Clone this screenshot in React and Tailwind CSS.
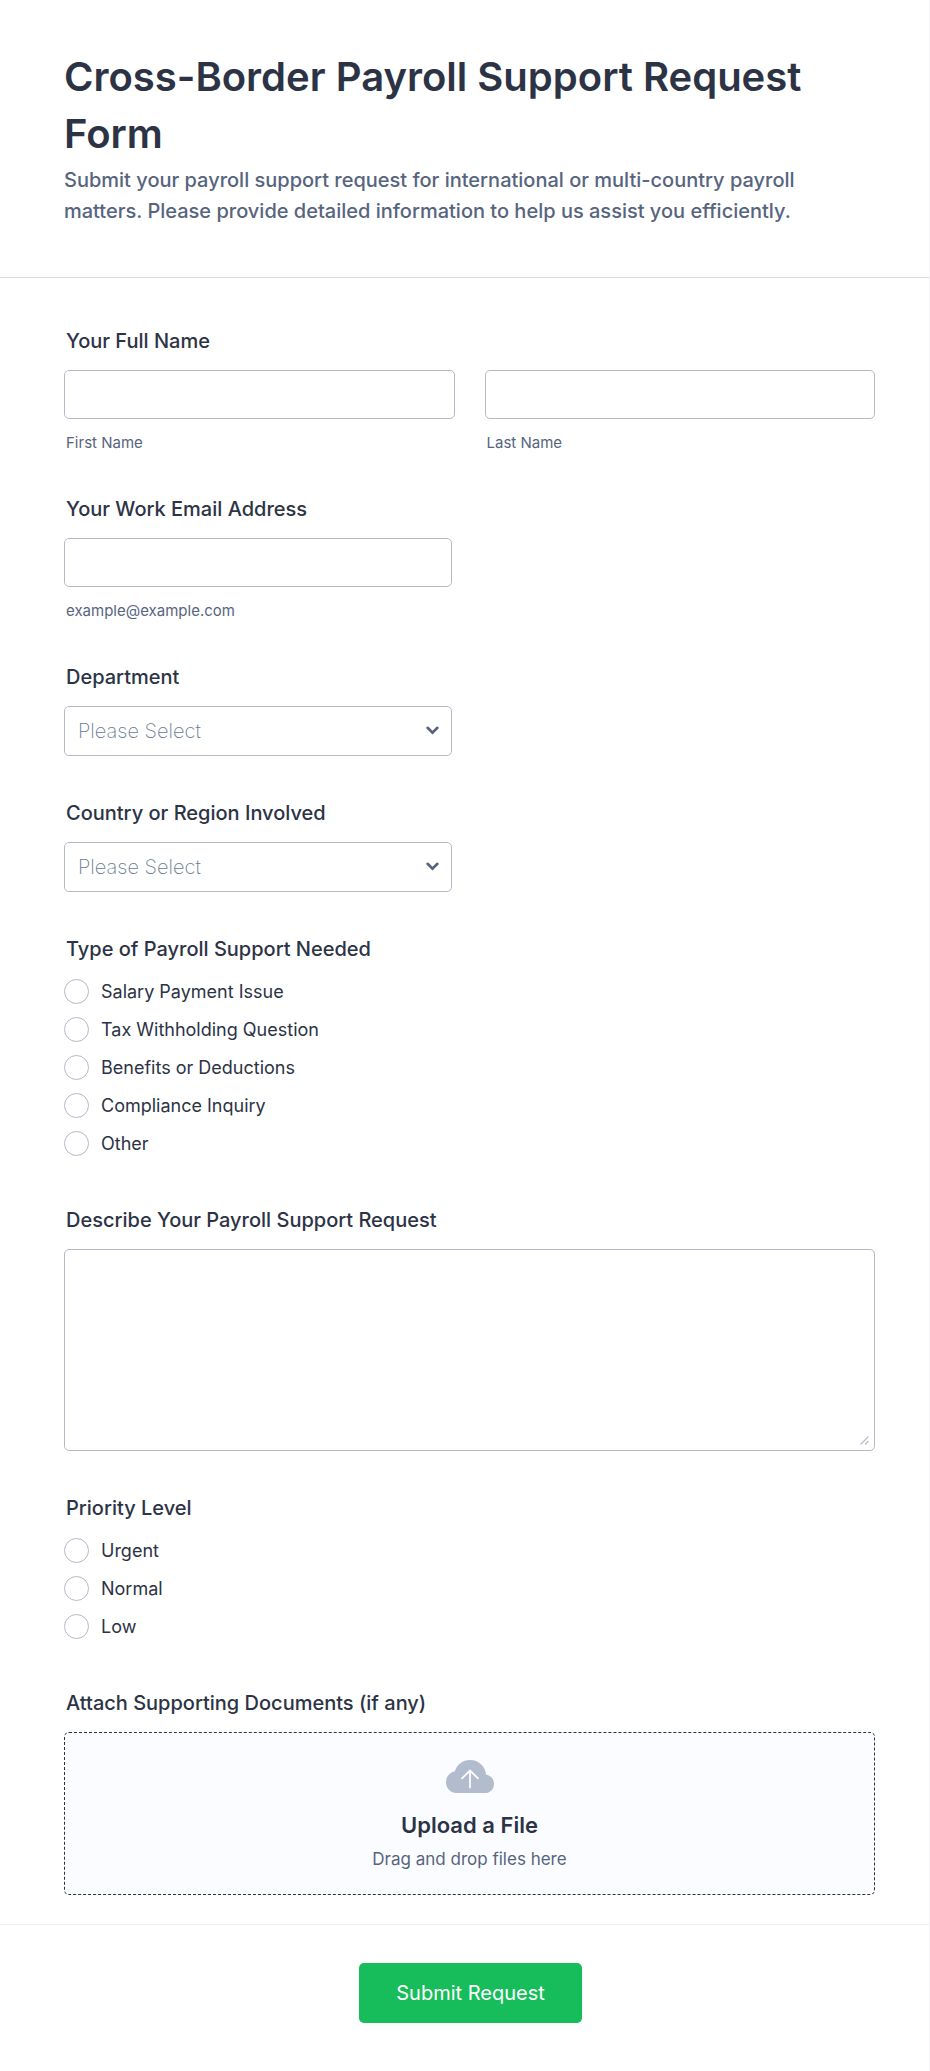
import React, { useState } from "react";

const supportTypes = [
  "Salary Payment Issue",
  "Tax Withholding Question",
  "Benefits or Deductions",
  "Compliance Inquiry",
  "Other",
];

const priorities = ["Urgent", "Normal", "Low"];

const departments = ["Human Resources", "Finance", "Operations", "Legal"];

const countries = ["United States", "United Kingdom", "Germany", "Japan"];

const labelClass = "block px-0.5 mb-[17px] text-xl leading-6 font-medium text-[#2c3345]";

const inputClass =
  "block w-full h-[49px] px-3 bg-white border border-[#b4b9c8] rounded-[5px] text-xl text-[#2c3345]";

function SubLabel({ htmlFor, children }) {
  return (
    <label htmlFor={htmlFor} className="block mt-[15px] px-0.5 text-[15px] leading-[18px] text-[#57647e]">
      {children}
    </label>
  );
}

function SelectField({ id, label, options }) {
  const [value, setValue] = useState("");

  return (
    <div>
      <label htmlFor={id} className={labelClass}>{label}</label>
      <div className="relative max-w-[388px]">
        <select
          id={id}
          value={value}
          onChange={(e) => setValue(e.target.value)}
          className="block w-full h-[50px] pl-[13px] pr-10 appearance-none bg-white border border-[#b4b9c8] rounded-[5px] text-xl font-extralight text-[#6b7b92]"
        >
          <option value="">Please Select</option>
          {options.map((option) => (
            <option key={option} value={option}>{option}</option>
          ))}
        </select>
        <svg
          className="absolute right-[13px] top-[20px] w-[13px] h-[9px] pointer-events-none"
          viewBox="0 0 13 9"
          fill="none"
          stroke="#58617c"
          strokeWidth="2.6"
          strokeLinecap="round"
        >
          <path d="M1.6 1.8 6.5 6.6 11.4 1.8" />
        </svg>
      </div>
    </div>
  );
}

function RadioField({ name, label, options }) {
  return (
    <fieldset className="pb-[7px]">
      <legend className={labelClass}>{label}</legend>
      <div className="flex flex-col gap-[13px] pt-px">
        {options.map((option) => (
          <label key={option} className="flex items-center gap-3 text-lg leading-[25px] text-[#2c3345]">
            <input
              type="radio"
              name={name}
              value={option}
              className="w-[25px] h-[25px] shrink-0 appearance-none bg-white border border-[#b4b9c8] rounded-full checked:border-[7px] checked:border-blue-600"
            />
            {option}
          </label>
        ))}
      </div>
    </fieldset>
  );
}

function CloudIcon() {
  return (
    <svg className="w-12 h-[33px]" viewBox="0 0 48 33" fill="none">
      <path
        fill="#b3bccc"
        d="M10.5 33C4.6 33 0 28.3 0 22.2 0 16.6 3.8 12.2 8.9 11.3 10.7 4.7 16.8 0 24 0 32.6 0 39.4 6.3 40 14.4 44.7 15.3 48 19.2 48 23.9 48 29 44.2 33 39 33Z"
      />
      <path
        d="M24 27.5V10.8M16 18.4 24 10.5 32 18.4"
        stroke="#fbfcff"
        strokeWidth="1.8"
        strokeLinecap="round"
        strokeLinejoin="round"
      />
    </svg>
  );
}

export default function App() {
  return (
    <form
      onSubmit={(e) => e.preventDefault()}
      className="min-h-screen bg-white border-r border-[#f3f3f8] font-['Inter',sans-serif]"
    >
      <header className="pt-12 pb-[50px] pl-16 pr-[54px] border-b border-[#d7d9e2]">
        <h1 className="text-[40px] leading-[57px] font-semibold text-[#2c3345]">
          Cross-Border Payroll Support Request Form
        </h1>
        <p className="mt-[3px] max-w-[760px] text-xl leading-[31px] font-medium text-[#57647e]">
          Submit your payroll support request for international or multi-country payroll matters.
          Please provide detailed information to help us assist you efficiently.
        </p>
      </header>

      <main className="flex flex-col gap-[45px] pt-[51px] pb-[29px] pl-16 pr-[54px]">
        <fieldset>
          <legend className={labelClass}>Your Full Name</legend>
          <div className="grid grid-cols-2 gap-[30px]">
            <div>
              <input id="first" type="text" className={inputClass} />
              <SubLabel htmlFor="first">First Name</SubLabel>
            </div>
            <div>
              <input id="last" type="text" className={inputClass} />
              <SubLabel htmlFor="last">Last Name</SubLabel>
            </div>
          </div>
        </fieldset>

        <div>
          <label htmlFor="email" className={labelClass}>Your Work Email Address</label>
          <div className="max-w-[388px]">
            <input id="email" type="email" className={inputClass} />
            <SubLabel htmlFor="email">example@example.com</SubLabel>
          </div>
        </div>

        <SelectField id="department" label="Department" options={departments} />
        <SelectField id="country" label="Country or Region Involved" options={countries} />

        <RadioField name="type" label="Type of Payroll Support Needed" options={supportTypes} />

        <div>
          <label htmlFor="details" className={labelClass}>Describe Your Payroll Support Request</label>
          <div className="relative">
            <textarea
              id="details"
              className="block w-full h-[202px] p-3 resize-none bg-white border border-[#b4b9c8] rounded-[5px] text-xl text-[#2c3345]"
            />
            <svg
              className="absolute right-1.5 bottom-1.5 w-[9px] h-[9px] pointer-events-none"
              viewBox="0 0 9 9"
              stroke="#b8bdc9"
              strokeWidth="1.2"
            >
              <path d="M0.5 8.5 8.5 0.5M5 8.5 8.5 5" />
            </svg>
          </div>
        </div>

        <RadioField name="priority" label="Priority Level" options={priorities} />

        <div>
          <span id="attach" className={labelClass}>Attach Supporting Documents (if any)</span>
          <button
            type="button"
            aria-describedby="attach"
            className="flex flex-col items-center w-full pt-[27px] pb-[23px] bg-[#fbfcff] border border-dashed border-[#2c3345] rounded-[5px]"
          >
            <CloudIcon />
            <span className="mt-[18px] text-[22px] leading-7 font-semibold text-[#2c3345]">Upload a File</span>
            <span className="mt-2 text-[17px] leading-6 text-[#57647e]">Drag and drop files here</span>
          </button>
        </div>
      </main>

      <footer className="flex justify-center pt-[38px] pb-[47px] pl-16 pr-[52px] border-t border-[#ededf4]">
        <button type="submit" className="h-[60px] px-[37px] bg-[#18bd5b] rounded-[5px] text-xl text-white">
          Submit Request
        </button>
      </footer>
    </form>
  );
}
